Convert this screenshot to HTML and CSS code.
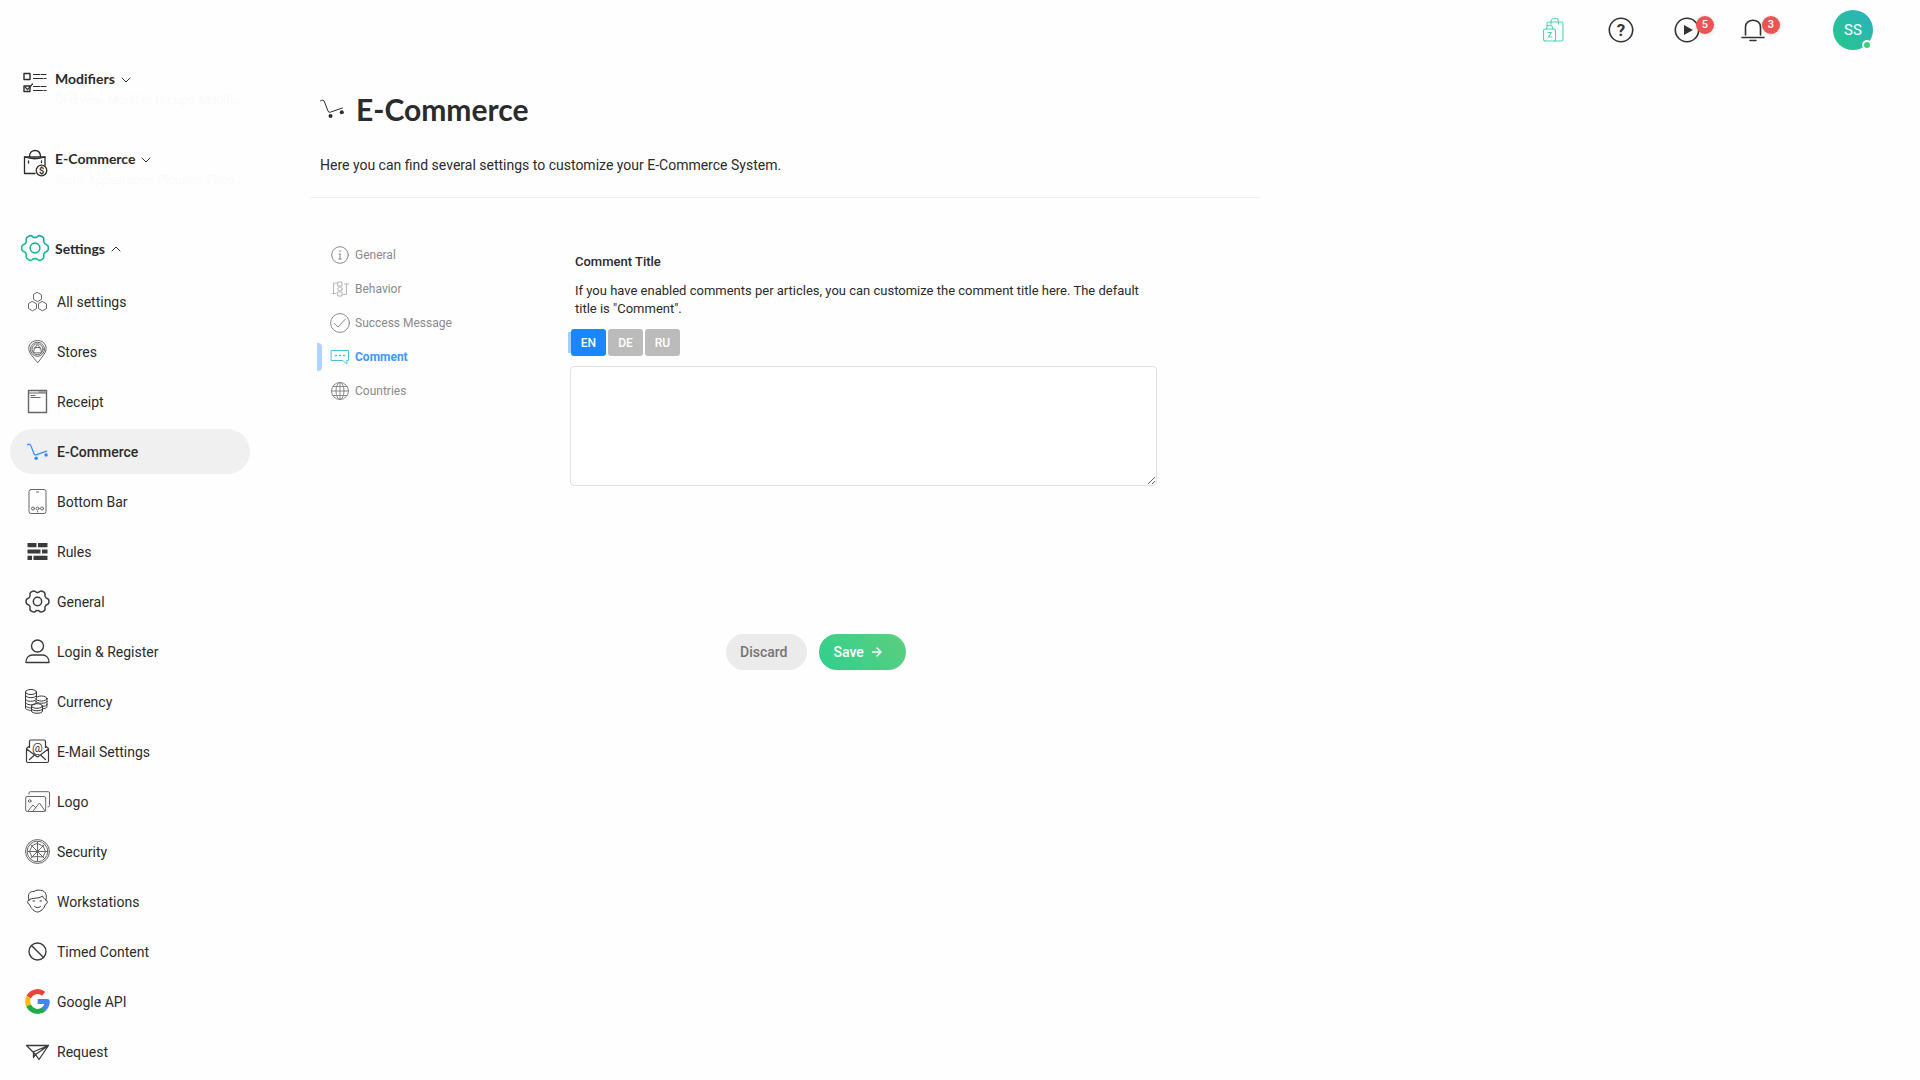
FILE: index.html
```html
<!DOCTYPE html>
<html lang="en">
<head>
    <meta charset="UTF-8">
    <meta name="viewport" content="width=device-width, initial-scale=1.0">
    <title>E-Commerce Settings</title>
    <link rel="stylesheet" href="styles.css">
</head>
<body>

    <!-- Shared icon shapes -->
    <svg class="defs" width="0" height="0" aria-hidden="true">
        <defs>
            <linearGradient id="gearGradient" gradientUnits="userSpaceOnUse" x1="-6" y1="10" x2="6" y2="-10">
                <stop offset="0" stop-color="#10c48a"/>
                <stop offset="1" stop-color="#16a5b8"/>
            </linearGradient>
            <symbol id="gear" viewBox="-12 -12 24 24">
                <path d="M7.6-4.4Q8-3.2 9.3-2.9 11-2.5 11 0 11 2.5 9.3 2.9 8 3.2 7.6 4.4 6.8 5.3 7.2 6.6 7.7 8.3 5.5 9.5 3.3 10.8 2.1 9.5 1.2 8.5 0 8.8-1.2 8.5-2.1 9.5-3.3 10.8-5.5 9.5-7.7 8.3-7.2 6.6-6.8 5.3-7.6 4.4-8 3.2-9.3 2.9-11 2.5-11 0-11-2.5-9.3-2.9-8-3.2-7.6-4.4-6.8-5.3-7.2-6.6-7.7-8.3-5.5-9.5-3.3-10.8-2.1-9.5-1.2-8.5 0-8.8 1.2-8.5 2.1-9.5 3.3-10.8 5.5-9.5 7.7-8.3 7.2-6.6 6.8-5.3 7.6-4.4Z"/>
                <circle r="4"/>
            </symbol>
            <symbol id="cart" viewBox="0 0 24 20">
                <path d="M.5 1.8Q3.500 0 4.500 3L8 12q.6 1.800 2.300 1.200L22.500 9"/>
                <circle cx="10.500" cy="17" r="2" fill="currentColor" stroke="none"/>
                <circle cx="21.800" cy="13.300" r="2" fill="currentColor" stroke="none"/>
            </symbol>
        </defs>
    </svg>

    <aside class="sidebar">
        <div class="group">
            <svg class="group-icon" viewBox="0 0 28 28">
                <path d="M3 4.500h6v6H3zM3 17h6v5.500H3z" stroke-width="1.400"/>
                <path d="M4.500 18.500l2 2.200 5-5.700M12.500 5.500h6M20 5.500h5M12.500 9.500h9M23 9.500h2M12.500 17.500h6M20 17.500h5M12.500 21.500h9M23 21.500h2" stroke-width="1.200"/>
            </svg>
            <div class="group-text">
                <button class="group-title">Modifiers
                    <svg class="chevron" viewBox="0 0 10 6"><path d="M1 1l4 4 4-4"/></svg>
                </button>
                <p>Overview, Modifier Groups, Modifi...</p>
            </div>
        </div>
        <div class="group">
            <svg class="group-icon" viewBox="0 0 28 28">
                <path d="M14 24.500H3.500V8H24v8.500" stroke-width="1.300"/>
                <path d="M8.500 8C8.500 3.500 11 1.500 14 1.500s5.500 2 5.500 6.500M3.500 8q10.500 3.500 20.500 0M7.500 12v2M20.500 12v1.500" stroke-width="1.300"/>
                <circle cx="20.500" cy="21.500" r="5.300"/>
                <text x="20.500" y="24.500" class="glyph bold">$</text>
            </svg>
            <div class="group-text">
                <button class="group-title">E-Commerce
                    <svg class="chevron" viewBox="0 0 10 6"><path d="M1 1l4 4 4-4"/></svg>
                </button>
                <p>State, Appearance, Pictures, Price...</p>
            </div>
        </div>
        <div class="group open">
            <svg class="group-icon" viewBox="-11.500 -11.500 23 23"><use href="#gear" x="-12" y="-12" width="24" height="24"/></svg>
            <div class="group-text">
                <button class="group-title">Settings
                    <svg class="chevron" viewBox="0 0 10 6"><path d="M1 5l4-4 4 4"/></svg>
                </button>
            </div>
        </div>

        <ul class="menu">
            <li><a href="#">
                <svg viewBox="0 0 25 25" class="light"><path d="M12.500 3.500l4 2.300v4.600l-4 2.300-4-2.300V5.800zM7.500 12.600l4 2.300v4.600l-4 2.300-4-2.300v-4.600zM17.500 12.600l4 2.300v4.600l-4 2.300-4-2.300v-4.600z"/></svg>
                All settings</a></li>
            <li><a href="#">
                <svg viewBox="0 0 25 25" class="light"><path d="M12.500 23.500L6 15.500C1 9 5 1.500 12.500 1.500S24 9 19 15.500z"/><circle cx="12.500" cy="10.300" r="7"/><circle cx="12.500" cy="10.300" r="5.500"/><path d="M8.500 13.500l1-5h6l1 5zM10.500 9c0-4 4-4 4 0"/></svg>
                Stores</a></li>
            <li><a href="#">
                <svg viewBox="0 0 25 25" class="light"><path d="M3.500 1.500h18v22h-18z" stroke-width="1.400"/><path d="M3.500 4h18M14 3h6M6 6.500h4M6 8.500h9"/></svg>
                Receipt</a></li>
            <li><a href="#" class="current">
                <svg viewBox="0 0 25 25"><use href="#cart" x="2" y="4" width="21" height="18"/></svg>
                E-Commerce</a></li>
            <li><a href="#">
                <svg viewBox="0 0 25 25" class="light"><rect x="4" y=".5" width="17" height="24" rx="2"/><path d="M11.500 3h2M12.500 22.500v.5"/><circle cx="8" cy="19.500" r="1.500"/><circle cx="12.500" cy="19.500" r="1.500"/><circle cx="17" cy="19.500" r="1.500"/></svg>
                Bottom Bar</a></li>
            <li><a href="#">
                <svg viewBox="0 0 25 25"><path d="M2.500 4h9v4.200h-9zM13 4h9.500v4.200H13zM2.500 10.400h13v4.200h-13zM17 10.400h5.500v4.200H17zM2.500 16.800H7V21H2.500zM8.500 16.800h14V21h-14z" fill="currentColor" stroke="none"/></svg>
                Rules</a></li>
            <li><a href="#">
                <svg viewBox="0 0 25 25"><use href="#gear" width="25" height="25"/></svg>
                General</a></li>
            <li><a href="#">
                <svg viewBox="0 0 25 25"><circle cx="12.500" cy="7" r="6"/><path d="M1 23.500h23c0-5-3-7.500-6.500-7.500h-10C4 16 1 18.500 1 23.500z"/></svg>
                Login &amp; Register</a></li>
            <li><a href="#">
                <svg viewBox="0 0 25 25" stroke-width="1"><ellipse cx="6" cy="3" rx="5.500" ry="2.500"/><path d="M.5 3v16c0 1.500 3 2.500 6 2.300M11.500 3v5M.5 6.500c0 3 11 3 11 0M.5 10c0 2.500 6 3 9.500 1.500M.5 13.500c0 2.300 6 3 9.500 1.800M.5 16.500c0 1.500 3 2.500 6 2.300"/><ellipse cx="16.500" cy="9.500" rx="5.500" ry="2.500"/><path d="M11 9.500v5M22 9.500v8c0 1.500-2 2.300-4.500 2.300M11 12.500c0 2.500 11 2.500 11 0M17 17.500c3 0 5-1 5-2"/><ellipse cx="12" cy="17" rx="5.500" ry="2.300"/><path d="M6.500 17v5c0 3 11 3 11 0v-5M6.500 20c0 2.500 11 2.500 11 0"/></svg>
                Currency</a></li>
            <li><a href="#">
                <svg viewBox="0 0 25 25"><path d="M4.500 8.500v-6q0-1.500 1.500-1.500h13q1.500 0 1.500 1.500v6M4.500 7L1.500 9.500V22q0 1.500 1.500 1.500h19q1.500 0 1.500-1.500V9.500L20.500 7M1.500 10l11 8 11-8M4.500 20.500l5-4.500M20.500 20.500l-5-4.500" stroke-width="1.200"/><text x="12.500" y="12.500" class="glyph at">@</text></svg>
                E-Mail Settings</a></li>
            <li><a href="#">
                <svg viewBox="0 0 25 25" class="light"><rect x=".7" y="7.500" width="20" height="15" rx="1.500"/><path d="M4 5V4q0-1.300 1.300-1.300h18q1.200 0 1.200 1.300v12.500q0 1.500-1.500 1.500M3 22l5-6 3 3M8 22l6.500-8 5.500 8"/><circle cx="4.700" cy="12" r="1.300"/></svg>
                Logo</a></li>
            <li><a href="#">
                <svg viewBox="-12.500 -12.500 25 25" class="light"><circle r="12"/><circle r="10.300"/><circle r="1.500"/><path d="M0-10v20M-10 0h20M-7-7L7 7M7-7L-7 7M0-8l5.500 2.500L8 0 5.500 5.500 0 5-5.500 5.500-8 0l2.500-5.500z"/></svg>
                Security</a></li>
            <li><a href="#">
                <svg viewBox="0 0 25 25" stroke-width="1"><path d="M4 11C2 5 5 2 9 2.500c3-2.500 11-2 12 3 .5 2 .5 4-.2 5.500M4 11c3-3 9-.5 13.500-4 1 2 2 3 3.300 4 2 0 2 4-.5 4.500-1 4-5 7.500-7.800 7.500S6 19.500 4.500 15.500C2 15 2 11 4 11zM8 12h1.500M15 12h1.500M9.500 17.500c1.500 1.500 4.500 1.500 6 0"/></svg>
                Workstations</a></li>
            <li><a href="#">
                <svg viewBox="0 0 25 25"><circle cx="12.500" cy="12.500" r="8.500"/><path d="M6.500 6.500l12 12"/></svg>
                Timed Content</a></li>
            <li><a href="#">
                <svg viewBox="0 0 25 25" class="google" stroke-width="5"><path d="M3.700 8.200A9.800 9.800 0 0 1 18.700 4.800" stroke="#ea4335"/><path d="M3.600 16.600A9.800 9.800 0 0 1 3.600 8.400" stroke="#fbbc05"/><path d="M18.800 20.200A9.800 9.800 0 0 1 3.600 16.600" stroke="#1fa947"/><path d="M12.700 12.500h9.600q-.1 4.900-3.900 8" stroke="#4285f4"/></svg>
                Google API</a></li>
            <li><a href="#">
                <svg viewBox="0 0 25 25" stroke-width="1.300"><path d="M1.500 6.500h22L14 20.500l-3.500-5zM1.500 6.500l6.500 6.500 15.500-6.500L10.500 15.500 8.500 18.500V13"/></svg>
                Request</a></li>
        </ul>
    </aside>

    <div class="content">
        <header class="topbar">
            <button class="top-btn shop" aria-label="Shop">
                <svg viewBox="0 0 26 26"><path d="M5 9V7q0-2 2-2h12q2 0 2 2v15.500q0 1.500-1.500 1.500H13M9 5c0-5 7.500-5 7.500 0M9 5v2M16.500 5v2M4.500 12c0-5 6-5 6.500 0"/><rect x="1.500" y="12" width="12" height="12" rx="2"/><path d="M6 15.500h3.500L6.500 20H10"/></svg>
            </button>
            <button class="top-btn" aria-label="Help">
                <svg viewBox="0 0 26 26"><circle cx="13" cy="13" r="11.700"/><text x="13" y="19" class="glyph question">?</text></svg>
            </button>
            <button class="top-btn" aria-label="Tutorials">
                <svg viewBox="0 0 26 26"><circle cx="13" cy="13" r="11.700"/><path d="M10 8l9 5-9 5z" fill="currentColor" stroke="none"/></svg>
                <span class="count">5</span>
            </button>
            <button class="top-btn" aria-label="Notifications">
                <svg viewBox="0 0 26 26"><path d="M5.500 18v-8c0-9 15-9 15 0v8M2 20.500h22M10 23.500h6"/></svg>
                <span class="count">3</span>
            </button>
            <button class="avatar">SS<span class="online"></span></button>
        </header>

        <main>
            <div class="page-head">
                <h1><svg viewBox="0 0 24 20"><use href="#cart" width="24" height="20"/></svg>E-Commerce</h1>
                <p>Here you can find several settings to customize your E-Commerce System.</p>
            </div>

            <div class="columns">
                <nav class="tabs">
                    <a href="#"><svg viewBox="0 0 20 20"><circle cx="10" cy="10" r="8.300"/><path d="M10 9v5M9 9h1M8.800 14h2.400M10 5.500v1"/></svg>General</a>
                    <a href="#"><svg viewBox="0 0 20 20" class="faint"><path d="M7 4H3.500v10.500M2 14.500h4M13 15.500h3.500V5M14.500 5h4M8 3h4v4H8zM8 13h4v4H8z"/><circle cx="10" cy="10" r="2.200"/></svg>Behavior</a>
                    <a href="#"><svg viewBox="0 0 20 20"><circle cx="10" cy="10" r="9.400"/><path d="M4.500 10.500l3.500 3.500 7.500-8"/></svg>Success Message</a>
                    <a href="#" class="current"><svg viewBox="0 0 20 20"><path d="M1.500 3.500h17v10h-1.700v3.500l-4-3.500H1.500z" stroke="#43c3e0"/><path d="M5.500 8.500h1M9.500 8.500h1M13.500 8.500h1" stroke="#43c3e0" stroke-width="1.500"/></svg>Comment</a>
                    <a href="#"><svg viewBox="0 0 20 20"><circle cx="10" cy="10" r="8.500"/><ellipse cx="10" cy="10" rx="4" ry="8.500"/><path d="M10 1.500v17M1.500 10h17M3 5.500h14M3 14.500h14"/></svg>Countries</a>
                </nav>

                <form class="panel">
                    <label for="commentTitle">Comment Title</label>
                    <p>If you have enabled comments per articles, you can customize the comment title here. The default title is "Comment".</p>
                    <div class="languages">
                        <button type="button" class="active">EN</button>
                        <button type="button">DE</button>
                        <button type="button">RU</button>
                    </div>
                    <textarea id="commentTitle"></textarea>
                    <div class="actions">
                        <button type="reset" class="discard">Discard</button>
                        <button type="submit" class="save">Save
                            <svg viewBox="0 0 10 10"><path d="M0 5h9M5 1l4 4-4 4"/></svg>
                        </button>
                    </div>
                </form>
            </div>
        </main>
    </div>

</body>
</html>
```

FILE: styles.css
```css
/* Basic Styles */
* {
    box-sizing: border-box;
}

body {
    margin: 0;
    display: flex;
    background-color: #fefefe;
    color: #2b2b2b;
    font-family: Roboto, "Liberation Sans", sans-serif;
    font-size: 14px;
    line-height: 20px;
}

h1, p, ul {
    margin: 0;
    padding: 0;
}

a {
    color: inherit;
    text-decoration: none;
}

button {
    border: none;
    background: none;
    padding: 0;
    color: inherit;
    font-family: inherit;
    cursor: pointer;
}

svg {
    flex: none;
    fill: none;
    stroke-linecap: round;
    stroke-linejoin: round;
}

.defs {
    position: absolute;
}

.glyph {
    fill: currentColor;
    stroke: none;
    text-anchor: middle;
    font-size: 9px;
}

.glyph.bold { font-weight: 700; }
.glyph.at { font-size: 12px; }
.glyph.question { font-size: 17px; font-weight: 700; }

/* Sidebar */
.sidebar {
    flex: none;
    width: 310px;
    padding: 67px 60px 5px 10px;
}

.group {
    display: flex;
    align-items: flex-start;
    gap: 6px;
    margin-bottom: 37px;
    padding-left: 11px;
}

.group.open {
    align-items: center;
    margin: 44px 0 17px;
}

.group-icon {
    width: 28px;
    height: 28px;
    margin-top: 2px;
    stroke: currentColor;
    stroke-width: 1.3;
}

.open .group-icon {
    margin-top: 0;
    stroke: url(#gearGradient);
}

.group-title {
    display: flex;
    align-items: center;
    gap: 6px;
    font-family: Lato, sans-serif;
    font-size: 14px;
    font-weight: 700;
    line-height: 23px;
}

.group-text p {
    color: #fafafa;
    font-size: 12px;
    white-space: nowrap;
}

.chevron {
    width: 10px;
    height: 6px;
    margin-top: 2px;
    stroke: currentColor;
}

.menu {
    display: flex;
    flex-direction: column;
    gap: 5px;
    list-style: none;
}

.menu a {
    display: flex;
    align-items: center;
    gap: 7px;
    height: 45px;
    padding: 0 15px;
    border-radius: 23px;
}

.menu a.current {
    background-color: #f0f0f0;
    font-weight: 500;
}

.menu svg {
    width: 25px;
    height: 25px;
    color: #3a3a3a;
    stroke: currentColor;
}

.menu svg:not([stroke-width]) {
    stroke-width: 1.4;
}

.menu svg.light {
    stroke: #666;
    stroke-width: 1;
}

.menu svg.google {
    stroke-linecap: butt;
}

.menu .current svg {
    color: #2a8cff;
}

/* Top Bar */
.content {
    flex: 1;
    min-width: 0;
}

.topbar {
    display: flex;
    justify-content: flex-end;
    align-items: center;
    height: 60px;
    padding-right: 47px;
}

.top-btn {
    position: relative;
    width: 26px;
    height: 26px;
    margin-right: 40px;
    color: #333;
}

.top-btn svg {
    display: block;
    stroke: currentColor;
    stroke-width: 1.6;
}

.top-btn.shop svg {
    stroke: #4fd3b8;
    stroke-width: 1.1;
}

.count {
    position: absolute;
    top: -1px;
    left: 22px;
    width: 18px;
    height: 18px;
    border-radius: 50%;
    background-color: #ea5455;
    box-shadow: 0 1px 4px rgba(0, 0, 0, 0.15);
    color: #fff;
    font-size: 11px;
    font-weight: 500;
    line-height: 18px;
    text-align: center;
}

.avatar {
    position: relative;
    width: 40px;
    height: 40px;
    margin-left: 27px;
    border-radius: 50%;
    background: linear-gradient(45deg, #25c889, #2bb1c0);
    color: #fff;
    font-size: 15px;
}

.online {
    position: absolute;
    right: 1px;
    bottom: 0;
    width: 10px;
    height: 10px;
    border: 2px solid #fff;
    border-radius: 50%;
    background-color: #3fcf7f;
}

/* Page */
main {
    max-width: 950px;
    padding-top: 29px;
}

.page-head {
    padding: 0 10px 22px;
    border-bottom: 1px solid #f0f0f0;
}

h1 {
    display: flex;
    align-items: center;
    gap: 12px;
    margin-bottom: 26px;
    font-family: Lato, sans-serif;
    font-size: 30px;
    font-weight: 700;
    line-height: 40px;
}

h1 svg {
    width: 24px;
    height: 20px;
    stroke: currentColor;
}

.columns {
    display: flex;
    padding-top: 40px;
}

/* Settings Tabs */
.tabs {
    flex: none;
    width: 260px;
    padding-left: 7px;
    color: #8a8a8a;
    font-size: 12px;
}

.tabs a {
    position: relative;
    display: flex;
    align-items: center;
    gap: 5px;
    height: 34px;
    padding-left: 13px;
}

.tabs svg {
    width: 20px;
    height: 20px;
    stroke: currentColor;
}

.tabs svg.faint {
    stroke: #b5b5b5;
}

.tabs a.current {
    color: #3f97ff;
    font-weight: 700;
}

.tabs a.current::before {
    content: "";
    position: absolute;
    left: 0;
    width: 5px;
    height: 28px;
    border-radius: 0 4px 4px 0;
    background-color: #b0d4ff;
}

/* Comment Form */
.panel {
    flex: 1;
    max-width: 587px;
    padding-top: 14px;
    font-size: 13px;
    line-height: 18px;
}

.panel label {
    display: block;
    margin: 0 5px 10px;
    font-weight: 500;
    line-height: 20px;
}

.panel p {
    margin: 0 5px 11px;
}

.languages {
    display: flex;
    gap: 2px;
    margin: 0 0 10px 1px;
}

.languages button {
    position: relative;
    width: 35px;
    height: 27px;
    border-radius: 3px;
    background-color: #bbb;
    color: #fff;
    font-size: 12px;
    font-weight: 500;
}

.languages .active {
    background-color: #1a86ff;
}

.languages .active::before {
    content: "";
    position: absolute;
    top: 3px;
    left: -3px;
    width: 3px;
    height: 21px;
    background-color: #a3ceff;
}

textarea {
    display: block;
    width: 100%;
    height: 120px;
    padding: 8px;
    border: 1px solid #e2e2e2;
    border-radius: 4px;
    background-color: #fff;
    font: inherit;
}

.actions {
    display: flex;
    gap: 12px;
    padding: 148px 0 0 156px;
}

.actions button {
    display: flex;
    align-items: center;
    gap: 8px;
    height: 36px;
    border-radius: 18px;
    font-size: 14px;
    font-weight: 500;
}

.discard {
    padding: 0 20px 0 14px;
    background-color: #ebebeb;
    color: #757575;
}

.save {
    padding: 0 24px 0 14px;
    background: linear-gradient(45deg, #2dd08d, #5fce7f);
    color: #fff;
}

.save svg {
    width: 10px;
    height: 10px;
    stroke: currentColor;
    stroke-width: 1.5;
}
```
